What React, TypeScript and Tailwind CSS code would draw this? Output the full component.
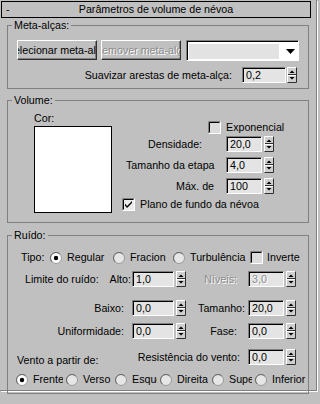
import React from "react";

function Spinner() {
  return (
    <svg width="10" height="16" viewBox="0 0 10 16" className="block shrink-0">
      <rect x="0" y="0" width="10" height="16" fill="#cfcfcf" />
      <path d="M0.5 15.5V0.5H9.5" stroke="#ffffff" fill="none" />
      <path d="M0.5 15.5H9.5V0.5" stroke="#303030" fill="none" />
      <path d="M1 7.5H9" stroke="#303030" />
      <path d="M1 8.5H9" stroke="#ffffff" />
      <polygon points="2.5,6 7.5,6 5,3.5" fill="#000" />
      <polygon points="2.5,10 7.5,10 5,12.5" fill="#000" />
    </svg>
  );
}

function Field({ value, w, disabled }: { value: string; w: string; disabled?: boolean }) {
  return (
    <div
      className={
        "h-[16px] shrink-0 bg-[#e4e4e4] border border-t-[#808080] border-l-[#808080] border-r-white border-b-white shadow-[inset_1px_1px_0_#000] pl-[3px] flex items-center overflow-hidden whitespace-nowrap " +
        w +
        (disabled ? " text-[#8c8c8c] [text-shadow:1px_1px_0_#fff]" : " text-black")
      }
    >
      {value}
    </div>
  );
}

function Check({ checked }: { checked?: boolean }) {
  return (
    <svg width="13" height="13" viewBox="0 0 13 13" className="block shrink-0">
      <rect x="0" y="0" width="13" height="13" fill={checked ? "#ececec" : "#dcdcdc"} />
      <path d="M0.5 12.5V0.5H12.5" stroke="#808080" fill="none" />
      <path d="M1.5 11.5V1.5H11.5" stroke="#000" fill="none" />
      <path d="M0.5 12.5H12.5V0.5" stroke="#ffffff" fill="none" />
      {checked && <path d="M3 5.5L5 8L10 3V5L5 10L3 7.5Z" fill="#000" />}
    </svg>
  );
}

function Radio({ on }: { on?: boolean }) {
  return (
    <svg width="12" height="12" viewBox="0 0 12 12" className="block shrink-0">
      <circle cx="6" cy="6" r="5.5" fill={on ? "#ffffff" : "#e6e6e6"} stroke="#9a9a9a" />
      <path d="M2.1 9.9A5.5 5.5 0 0 1 9.9 2.1" stroke="#6a6a6a" fill="none" />
      {on && <circle cx="6" cy="6" r="2.2" fill="#000" />}
    </svg>
  );
}

function RadioItem({ label, w, on }: { label: string; w: string; on?: boolean }) {
  return (
    <div className={"flex items-center overflow-hidden whitespace-nowrap shrink-0 " + w}>
      <Radio on={on} />
      <span className="ml-[5px]">{label}</span>
    </div>
  );
}

export default function App() {
  return (
    <div className="w-[320px] h-[404px] bg-[#c0c0c0] overflow-hidden text-black text-[10.7px] leading-[13px] font-['Liberation_Sans',Arial,sans-serif]">
      <div className="mt-[9px] w-[317px] h-[391px] border-r border-b border-[#808080] shadow-[1px_1px_0_#ffffff]">
        <div className="-mt-[9px]">
          {/* Title bar */}
          <div className="ml-[1px] pt-[1px]">
            <div className="w-[310px] h-[17px] border border-black flex items-center bg-[#c0c0c0]">
              <span className="w-[20px] pl-[4px]">-</span>
              <span className="flex-1 text-center pr-[20px]">Parâmetros de volume de névoa</span>
            </div>
          </div>

          {/* Meta-alças */}
          <fieldset className="ml-[7px] mt-[1px] w-[302px] border border-[#808080] p-0 pb-[5px]">
            <legend className="ml-[4px] px-[2px] leading-[13px]">Meta-alças:</legend>
            <div className="pt-[8px] flex items-start">
              <div className="ml-[9px] w-[80px] h-[20px] border border-t-white border-l-white border-r-[#303030] border-b-[#303030] shadow-[inset_-1px_-1px_0_#808080] flex justify-center items-center overflow-hidden whitespace-nowrap">
                <span className="shrink-0">Selecionar meta-alça</span>
              </div>
              <div className="ml-[4px] w-[80px] h-[20px] border border-t-white border-l-white border-r-[#303030] border-b-[#303030] shadow-[inset_-1px_-1px_0_#808080] flex justify-center items-center overflow-hidden whitespace-nowrap text-[#8c8c8c] [text-shadow:1px_1px_0_#fff]">
                <span className="shrink-0">Remover meta-alça</span>
              </div>
              <div className="ml-[5px] w-[113px] h-[21px] bg-white border border-t-[#808080] border-l-[#808080] border-r-white border-b-white shadow-[inset_1px_1px_0_#000] flex items-center pl-[2px] pt-[2px] pb-[1px]">
                <div className="w-[90px] h-[15px] bg-[#e2e2e2]" />
                <svg width="9" height="5" viewBox="0 0 9 5" className="ml-[7px] block">
                  <polygon points="0,0 9,0 4.5,5" fill="#000" />
                </svg>
              </div>
            </div>
            <div className="mt-[6px] flex items-center h-[16px]">
              <div className="w-[234px] text-right pr-[10px] whitespace-nowrap">Suavizar arestas de meta-alça:</div>
              <Field value="0,2" w="w-[44px]" />
              <div className="ml-[1px]">
                <Spinner />
              </div>
            </div>
          </fieldset>

          {/* Volume */}
          <fieldset className="ml-[7px] mt-[5px] w-[302px] border border-[#808080] p-0 pb-[9px]">
            <legend className="ml-[4px] px-[2px] leading-[13px]">Volume:</legend>
            <div className="flex items-start">
              <div className="ml-[26px] pt-[5px] flex flex-col">
                <span className="leading-[13px]">Cor:</span>
                <div className="mt-[1px] w-[78px] h-[87px] bg-white border border-black" />
              </div>
              <div className="ml-[10px] pt-[14px] flex flex-col">
                <div className="flex items-center h-[13px] pl-[86px]">
                  <Check />
                  <span className="ml-[5px]">Exponencial</span>
                </div>
                <div className="mt-[2px] flex items-center h-[16px]">
                  <span className="ml-[26px] w-[78px] whitespace-nowrap">Densidade:</span>
                  <Field value="20,0" w="w-[36px]" />
                  <div className="ml-[2px]">
                    <Spinner />
                  </div>
                </div>
                <div className="mt-[5px] flex items-center h-[16px]">
                  <span className="ml-[4px] w-[100px] whitespace-nowrap">Tamanho da etapa</span>
                  <Field value="4,0" w="w-[36px]" />
                  <div className="ml-[2px]">
                    <Spinner />
                  </div>
                </div>
                <div className="mt-[5px] flex items-center h-[16px]">
                  <span className="ml-[54px] w-[50px] whitespace-nowrap">Máx. de</span>
                  <Field value="100" w="w-[36px]" />
                  <div className="ml-[2px]">
                    <Spinner />
                  </div>
                </div>
                <div className="mt-[4px] flex items-center h-[13px]">
                  <Check checked />
                  <span className="ml-[5px]">Plano de fundo da névoa</span>
                </div>
              </div>
            </div>
          </fieldset>

          {/* Ruído */}
          <fieldset className="ml-[7px] mt-[6px] w-[302px] border border-[#808080] p-0 pb-[7px]">
            <legend className="ml-[4px] px-[2px] leading-[13px]">Ruído:</legend>
            <div className="pt-[9px] flex items-center h-[22px] whitespace-nowrap">
              <span className="ml-[13px] w-[29px] shrink-0">Tipo:</span>
              <RadioItem label="Regular" w="w-[63px]" on />
              <RadioItem label="Fracional" w="w-[53px]" />
              <div className="w-[7px] shrink-0" />
              <RadioItem label="Turbulência" w="w-[77px]" />
              <div className="flex items-center">
                <Check />
                <span className="ml-[4px]">Inverte</span>
              </div>
            </div>
            <div className="mt-[7px] flex items-center h-[16px] whitespace-nowrap">
              <div className="w-[124px] flex justify-between pr-[1px]">
                <span className="ml-[17px]">Limite do ruído:</span>
                <span>Alto:</span>
              </div>
              <Field value="1,0" w="w-[42px]" />
              <div className="ml-[2px]">
                <Spinner />
              </div>
              <div className="w-[62px] text-right pr-[11px] text-[#8c8c8c] [text-shadow:1px_1px_0_#fff]">Níveis:</div>
              <Field value="3,0" w="w-[36px]" disabled />
              <div className="ml-[2px]">
                <Spinner />
              </div>
            </div>
            <div className="mt-[13px] flex items-center h-[16px] whitespace-nowrap">
              <div className="w-[124px] text-right pr-[8px]">Baixo:</div>
              <Field value="0,0" w="w-[42px]" />
              <div className="ml-[2px]">
                <Spinner />
              </div>
              <div className="w-[62px] text-right pr-[3px]">Tamanho:</div>
              <Field value="20,0" w="w-[36px]" />
              <div className="ml-[2px]">
                <Spinner />
              </div>
            </div>
            <div className="mt-[7px] flex items-center h-[16px] whitespace-nowrap">
              <div className="w-[124px] text-right pr-[8px]">Uniformidade:</div>
              <Field value="0,0" w="w-[42px]" />
              <div className="ml-[2px]">
                <Spinner />
              </div>
              <div className="w-[62px] text-right pr-[11px]">Fase:</div>
              <Field value="0,0" w="w-[36px]" />
              <div className="ml-[2px]">
                <Spinner />
              </div>
            </div>
            <div className="mt-[10px] flex items-center h-[16px] whitespace-nowrap">
              <span className="ml-[9px] w-[231px] flex justify-between pr-[8px]">
                <span className="relative top-[3px]">Vento a partir de:</span>
                <span>Resistência do vento:</span>
              </span>
              <Field value="0,0" w="w-[36px]" />
              <div className="ml-[2px]">
                <Spinner />
              </div>
            </div>
            <div className="mt-[8px] flex items-center h-[13px] whitespace-nowrap">
              <div className="ml-[8px] flex items-center">
                <RadioItem label="Frente" w="w-[47px]" on />
                <div className="w-[3px]" />
                <RadioItem label="Verso" w="w-[46px]" />
                <div className="w-[3px]" />
                <RadioItem label="Esquerda" w="w-[42px]" />
                <div className="w-[3px]" />
                <RadioItem label="Direita" w="w-[49px]" />
                <div className="w-[3px]" />
                <RadioItem label="Superior" w="w-[40px]" />
                <div className="w-[3px]" />
                <RadioItem label="Inferior" w="w-[52px]" />
              </div>
            </div>
          </fieldset>
        </div>
      </div>
    </div>
  );
}
